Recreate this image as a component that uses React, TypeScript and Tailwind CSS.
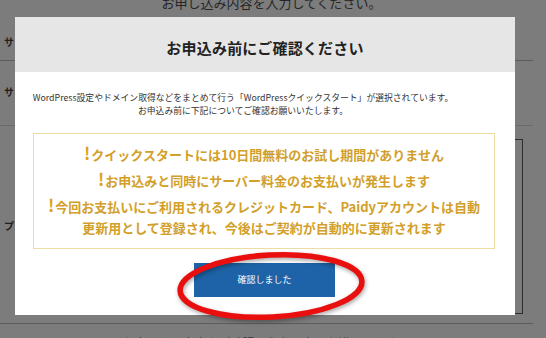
import React from 'react';

const notices: React.ReactNode[] = [
  'クイックスタートには10日間無料のお試し期間がありません',
  'お申込みと同時にサーバー料金のお支払いが発生します',
  <>
    今回お支払いにご利用されるクレジットカード、Paidyアカウントは自動
    <br />
    更新用として登録され、今後はご契約が自動的に更新されます
  </>,
];

function Notice({ children }: { children: React.ReactNode }) {
  return (
    <p className="text-center text-[13px] font-bold leading-[21px] text-[#d2a02a]">
      <span className="mr-[1px] text-[17px] leading-[17px] text-[#dca31c]">!</span>
      {children}
    </p>
  );
}

export default function App() {
  return (
    <div
      className="relative h-[338px] w-[546px] overflow-hidden bg-[#7c7c7c]"
      style={{ fontFamily: '"Noto Sans CJK JP", "Noto Sans", sans-serif' }}
    >
      {/* dimmed page behind the dialog */}
      <div className="w-[533px] text-[#1f1f1f]">
        <p className="-mt-[5px] h-[16px] pl-[10px] text-center text-[13px] leading-[16px] text-[#262626]">
          お申し込み内容を入力してください。
        </p>
        <div className="h-[50px] border-b border-[#5c5c5c] pl-[4px] pt-[25px] text-[10px] font-bold leading-[12px]">
          サ
        </div>
        <div className="h-[65px] border-b border-[#6a6a6a] pl-[4px] pt-[25px] text-[10px] font-bold leading-[12px]">
          サ
        </div>
        <div className="flex h-[198px] items-start justify-between border-b border-[#5c5c5c] pl-[4px]">
          <span className="mt-[94px] text-[10px] font-bold leading-[12px]">プ</span>
          <div className="mr-[10px] mt-[13px] h-[175px] w-[380px] border border-[#2e2e2e]" />
        </div>
        <p className="mt-[12px] text-center text-[12px] leading-[14px] text-[#3a3a3a]">
          お申し込み内容をご確認のうえ、次へお進みください
        </p>
      </div>

      {/* dialog */}
      <div className="absolute left-[15px] top-[17px] w-[500px] bg-white">
        <div className="flex h-[55px] items-center justify-center bg-[#e6e6e6] pt-[8px]">
          <h2 className="text-[15px] font-bold tracking-[0.2px] text-[#222]">お申込み前にご確認ください</h2>
        </div>
        <div className="pb-[18px] pt-[19px]">
          <p className="pr-[44px] text-center text-[8.8px] leading-[13px] text-[#333]">
            WordPress設定やドメイン取得などをまとめて行う「WordPressクイックスタート」が選択されています。
            <br />
            お申込み前に下記についてご確認お願いいたします。
          </p>
          <div className="ml-[18px] mr-[20px] mt-[16px] flex flex-col gap-[5px] border border-[#ecdda4] px-[8px] py-[10px]">
            {notices.map((n, i) => (
              <Notice key={i}>{n}</Notice>
            ))}
          </div>
          <div className="mt-[14px] flex justify-center">
            <button
              type="button"
              className="ml-[-1px] h-[34px] w-[141px] bg-[#1e63a7] text-[9px] text-white"
            >
              確認しました
            </button>
          </div>
        </div>
      </div>

      {/* red annotation ring */}
      <svg
        className="pointer-events-none absolute left-[168px] top-[246px]"
        width="206"
        height="82"
        viewBox="0 0 206 82"
        style={{ filter: 'drop-shadow(1px 2px 2px rgba(0,0,0,0.35))' }}
      >
        <ellipse
          cx="103"
          cy="40"
          rx="91"
          ry="31"
          transform="rotate(-3 103 40)"
          fill="none"
          stroke="#ea0f0f"
          strokeWidth="5.5"
        />
      </svg>
    </div>
  );
}
